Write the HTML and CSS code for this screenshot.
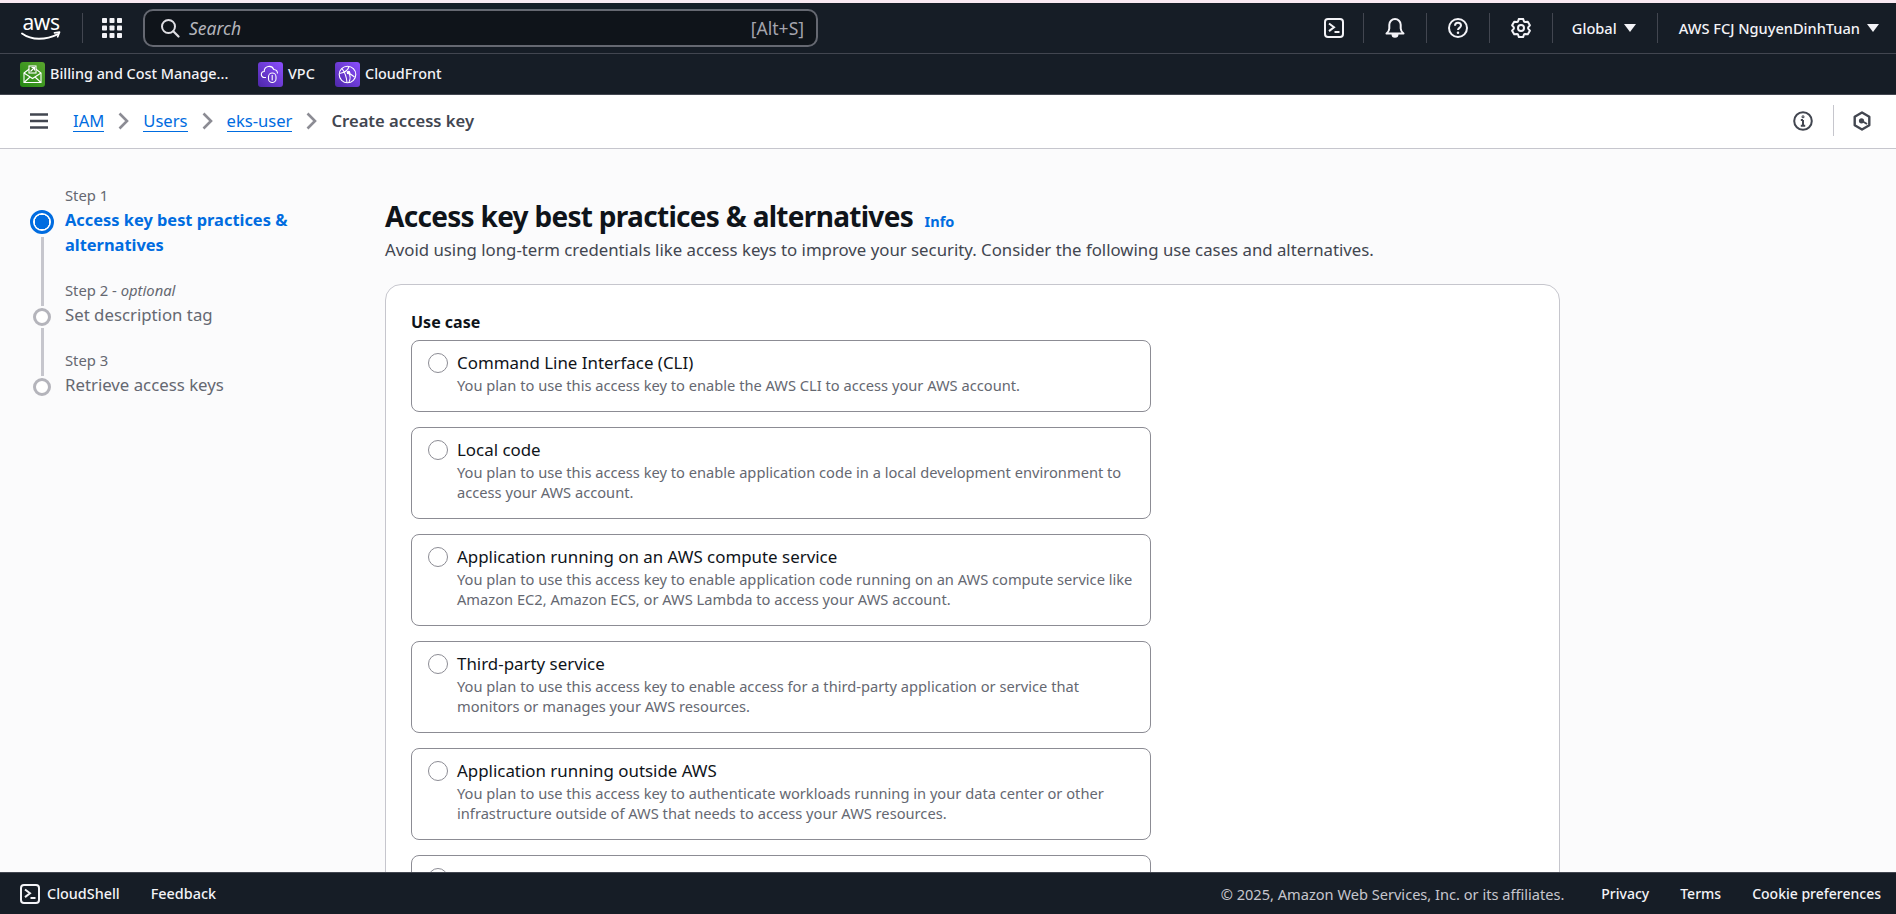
FILE: index.html
```html
<!DOCTYPE html>
<html lang="en">
<head>
<meta charset="utf-8">
<title>Create access key</title>
<link rel="stylesheet" href="styles.css">
</head>
<body>
<div class="strip"></div>
<header class="topnav">
  <svg class="aws" viewBox="0 0 40 26" width="40" height="26">
    <text x="20" y="14" text-anchor="middle" class="aws-text">aws</text>
    <path d="M1 17.500c5 3.600 11 5.300 17 5.300 6 0 13-1.600 19-4.600" fill="none" stroke="#fff" stroke-width="1.900" stroke-linecap="round"/>
    <path d="M33.500 16.800l5-.6-1.800 4.600" fill="none" stroke="#fff" stroke-width="1.700" stroke-linecap="round" stroke-linejoin="round"/>
  </svg>
  <span class="vr vr-logo"></span>
  <svg class="grid-ic" viewBox="0 0 20 20" width="20" height="20">
    <g fill="#f3f3f7"><rect x="0" y="0" width="5" height="5" rx=".8"/><rect x="7.500" y="0" width="5" height="5" rx=".8"/><rect x="15" y="0" width="5" height="5" rx=".8"/><rect x="0" y="7.500" width="5" height="5" rx=".8"/><rect x="7.500" y="7.500" width="5" height="5" rx=".8"/><rect x="15" y="7.500" width="5" height="5" rx=".8"/><rect x="0" y="15" width="5" height="5" rx=".8"/><rect x="7.500" y="15" width="5" height="5" rx=".8"/><rect x="15" y="15" width="5" height="5" rx=".8"/></g>
  </svg>
  <div class="search">
    <svg viewBox="0 0 20 20" width="20" height="20"><circle cx="8.500" cy="8.500" r="6.500" fill="none" stroke="#dedee3" stroke-width="2"/><path d="M13.300 13.300l5.200 5.200" stroke="#dedee3" stroke-width="2.200" stroke-linecap="round"/></svg>
    <span class="search-ph">Search</span>
    <span class="search-kbd">[Alt+S]</span>
  </div>
  <div class="nav-right">
    <span class="nav-ic nav-ic-first"><svg viewBox="0 0 20 20" width="20" height="20" fill="none" stroke="#f3f3f7" stroke-width="2"><rect x="1" y="1" width="18" height="18" rx="3"/><path d="M5 5.500l5 3.800-5 3.800M10.500 14h5"/></svg></span>
    <span class="vr"></span>
    <span class="nav-ic"><svg viewBox="0 0 20 20" width="20" height="20" fill="none" stroke="#f3f3f7" stroke-width="2" stroke-linejoin="round"><path d="M1.500 15.500h17c-1.500-1.300-2.800-2.500-2.800-5V6.700a5.700 5.700 0 0 0-11.400 0v3.800c0 2.500-1.300 3.700-2.800 5z"/><path d="M7.500 16.200a2.500 2.500 0 0 0 5 0z" fill="#f3f3f7"/></svg></span>
    <span class="vr"></span>
    <span class="nav-ic"><svg viewBox="0 0 20 20" width="20" height="20" fill="none" stroke="#f3f3f7" stroke-width="2"><circle cx="10" cy="10" r="9"/><path d="M7 7.800c0-1.800 1.400-3 3-3s3 1.100 3 2.800c0 2.200-3 2.300-3 4.400"/><circle cx="10" cy="14.800" r=".6" stroke-width="1.400"/></svg></span>
    <span class="vr"></span>
    <span class="nav-ic"><svg viewBox="0 0 20 20" width="20" height="20" fill="none" stroke="#f3f3f7" stroke-width="2" stroke-linejoin="round"><path d="M7.900 .9H12.100L13 3.500 14.130 4.100 16.800 3.660 18.890 7.280 17.170 9.370V10.630L18.890 12.720 16.800 16.340 14.130 15.900 13 16.500 12.100 19.100H7.900L7 16.500 5.870 15.900 3.200 16.340 1.110 12.720 2.830 10.630V9.370L1.110 7.280 3.200 3.660 5.870 4.100 7 3.500Z"/><circle cx="10" cy="10" r="3"/></svg></span>
    <span class="vr"></span>
    <span class="nav-menu nav-region">Global<i class="caret"></i></span>
    <span class="vr"></span>
    <span class="nav-menu nav-user">AWS FCJ NguyenDinhTuan<i class="caret"></i></span>
  </div>
</header>
<nav class="favbar">
  <a class="fav fav-billing">
    <svg class="svc svc-green" viewBox="0 0 25 25" width="25" height="25" fill="none" stroke="#fff" stroke-width="1.100"><path d="M4 11l8.500-6.500L21 11v9.500H4z"/><path d="M4 11l8.500 5.500L21 11M4 20.500l6-5.500M21 20.500l-6-5.500"/><rect x="9" y="4" width="7" height="7" fill="#3f8624"/><path d="M10.500 9.500l4-4M11.500 5.500h3v3"/></svg>
    <span>Billing and Cost Manage...</span>
  </a>
  <a class="fav fav-vpc">
    <svg class="svc svc-purple" viewBox="0 0 25 25" width="25" height="25" fill="none" stroke="#fff" stroke-width="1.100"><path d="M8 15.500H6.500a3 3 0 0 1-.3-6 5 5 0 0 1 9.600-2 4 4 0 0 1 3.700 4"/><rect x="10.500" y="11" width="7.500" height="9.500" rx="3.700"/><path d="M14.200 13v5.500"/></svg>
    <span>VPC</span>
  </a>
  <a class="fav fav-cf">
    <svg class="svc svc-purple" viewBox="0 0 25 25" width="25" height="25" fill="none" stroke="#fff" stroke-width="1.100"><circle cx="12.500" cy="12.500" r="8.300"/><path d="M7 6.500c3 4 4.500 8 5 14M14 4.500c-1 4-4 6-9.500 7M14 11l5.500 4M14 11c1.500 3 1.500 6 0 9"/><circle cx="13.500" cy="10.500" r="1.300" fill="#fff"/></svg>
    <span>CloudFront</span>
  </a>
</nav>
<div class="crumbbar">
  <svg class="menu-ic" viewBox="0 0 18 16" width="18" height="16"><path d="M0 1.500h18M0 8h18M0 14.500h18" stroke="#424650" stroke-width="2.600"/></svg>
  <a class="crumb">IAM</a>
  <svg class="chev" viewBox="0 0 11 18" width="11" height="18"><path d="M1.500 1.500L9 9l-7.500 7.500" fill="none" stroke="#8c8c94" stroke-width="2.600"/></svg>
  <a class="crumb">Users</a>
  <svg class="chev" viewBox="0 0 11 18" width="11" height="18"><path d="M1.500 1.500L9 9l-7.500 7.500" fill="none" stroke="#8c8c94" stroke-width="2.600"/></svg>
  <a class="crumb">eks-user</a>
  <svg class="chev" viewBox="0 0 11 18" width="11" height="18"><path d="M1.500 1.500L9 9l-7.500 7.500" fill="none" stroke="#8c8c94" stroke-width="2.600"/></svg>
  <span class="crumb-current">Create access key</span>
  <div class="crumb-tools">
    <svg viewBox="0 0 20 20" width="20" height="20" fill="none" stroke="#424650" stroke-width="2"><circle cx="10" cy="10" r="8.800"/><path d="M10 9v6M7.800 14.800h4.400M7.800 9h2.200"/><circle cx="10" cy="5.700" r=".5"/></svg>
    <span class="vr vr-tools"></span>
    <svg viewBox="0 0 20 20" width="20" height="20" fill="none" stroke="#424650" stroke-width="2.400" stroke-linejoin="round"><path d="M10 1.500l7.300 4.200v8.600L10 18.500l-7.300-4.200V5.700z"/><path d="M10 10l5 3" stroke-width="2"/><circle cx="9.500" cy="9.800" r="2.600" fill="#424650" stroke="none"/></svg>
  </div>
</div>
<div class="main">
  <aside class="steps">
    <div class="step step-line-long">
      <div class="step-label">Step 1</div>
      <div class="step-title step-title-active"><i class="dot dot-active"></i>Access key best practices &amp; alternatives</div>
    </div>
    <div class="step step-line-short">
      <div class="step-label">Step 2 - <em>optional</em></div>
      <div class="step-title"><i class="dot"></i>Set description tag</div>
    </div>
    <div class="step">
      <div class="step-label">Step 3</div>
      <div class="step-title"><i class="dot"></i>Retrieve access keys</div>
    </div>
  </aside>
  <section class="content">
    <h1 class="title">Access key best practices &amp; alternatives <a class="info">Info</a></h1>
    <p class="subtitle">Avoid using long-term credentials like access keys to improve your security. Consider the following use cases and alternatives.</p>
    <div class="card">
      <div class="field-label">Use case</div>
      <div class="options">
        <div class="option"><i class="radio"></i><div><div class="opt-title">Command Line Interface (CLI)</div><div class="opt-desc">You plan to use this access key to enable the AWS CLI to access your AWS account.</div></div></div>
        <div class="option"><i class="radio"></i><div><div class="opt-title">Local code</div><div class="opt-desc">You plan to use this access key to enable application code in a local development environment to access your AWS account.</div></div></div>
        <div class="option"><i class="radio"></i><div><div class="opt-title">Application running on an AWS compute service</div><div class="opt-desc">You plan to use this access key to enable application code running on an AWS compute service like Amazon EC2, Amazon ECS, or AWS Lambda to access your AWS account.</div></div></div>
        <div class="option"><i class="radio"></i><div><div class="opt-title">Third-party service</div><div class="opt-desc">You plan to use this access key to enable access for a third-party application or service that monitors or manages your AWS resources.</div></div></div>
        <div class="option"><i class="radio"></i><div><div class="opt-title">Application running outside AWS</div><div class="opt-desc">You plan to use this access key to authenticate workloads running in your data center or other infrastructure outside of AWS that needs to access your AWS resources.</div></div></div>
        <div class="option"><i class="radio"></i><div><div class="opt-title">Other</div><div class="opt-desc">Your use case is not listed here.</div></div></div>
      </div>
    </div>
  </section>
</div>
<footer class="footer">
  <svg viewBox="0 0 20 20" width="20" height="20" fill="none" stroke="#f3f3f7" stroke-width="2"><rect x="1" y="1" width="18" height="18" rx="3"/><path d="M5 5.500l5 3.800-5 3.800M10.500 14h5"/></svg>
  <a class="foot-shell">CloudShell</a>
  <a class="foot-feedback">Feedback</a>
  <span class="foot-copy">© 2025, Amazon Web Services, Inc. or its affiliates.</span>
  <a class="foot-link">Privacy</a>
  <a class="foot-link">Terms</a>
  <a class="foot-link">Cookie preferences</a>
</footer>
</body>
</html>
```
FILE: styles.css
```css
* { box-sizing: border-box; }
html, body { height: 100%; }
body {
  margin: 0;
  height: 914px;
  overflow: hidden;
  display: flex;
  flex-direction: column;
  background: #fbfbfc;
  color: #0f141a;
  font: 14px/20px "Noto Sans", sans-serif;
}
a { color: inherit; text-decoration: none; }
i { font-style: normal; }
.strip { height: 3px; background: #f9e9f1; flex: none; }

.topnav {
  height: 51px; flex: none;
  display: flex; align-items: center;
  background: #161d26;
  border-bottom: 1px solid #424650;
  padding-left: 21px;
}
.aws { flex: none; margin-top: 2px; overflow: visible; }
.aws-text { font: 400 21px "Noto Sans", sans-serif; fill: #fff; letter-spacing: -.4px; }
.vr { width: 1px; height: 30px; background: #424650; flex: none; }
.vr-logo { margin: 0 19px 0 21px; }
.grid-ic { flex: none; }
.search {
  margin-left: 21px; width: 675px; height: 38px;
  display: flex; align-items: center;
  padding: 0 12px 0 15px;
  background: #0f141a;
  border: 2px solid #656871;
  border-radius: 10px;
  color: #b4b4bb;
  font-size: 17.500px;
}
.search-ph { margin-left: 9px; font-style: italic; flex: 1; }
.search-kbd { color: #a4a4ad; }
.nav-right { margin-left: auto; display: flex; align-items: center; color: #f3f3f7; padding-right: 17px; }
.nav-ic { width: 62px; display: flex; justify-content: center; }
.nav-ic-first { padding-left: 4px; }
.nav-menu { display: flex; align-items: center; font-weight: 500; font-size: 14.600px; }
.nav-region { padding: 0 21px 0 19px; }
.nav-user { padding-left: 21px; }
.caret {
  width: 0; height: 0; margin-left: 7px;
  border-left: 6px solid transparent; border-right: 6px solid transparent;
  border-top: 8px solid #f3f3f7;
}

.favbar {
  height: 41px; flex: none;
  display: flex; align-items: center;
  background: #161d26;
  border-bottom: 1px solid #424650;
  padding-left: 20px;
  color: #f3f3f7;
  font-weight: 500;
  font-size: 14.400px;
}
.fav { display: flex; align-items: center; gap: 5px; white-space: nowrap; }
.fav-billing { width: 238px; }
.fav-vpc { width: 77px; }
.svc { flex: none; border-radius: 3px; }
.svc-green { background: linear-gradient(45deg, #248814, #5aa62e); }
.svc-purple { background: linear-gradient(45deg, #4d27a8, #8c4fff); }

.crumbbar {
  height: 54px; flex: none;
  display: flex; align-items: center;
  background: #fff;
  border-bottom: 1px solid #c6c6cd;
  padding: 0 24px 2px 30px;
  font-size: 16.600px;
}
.menu-ic { flex: none; margin-right: 25px; }
.crumb { color: #006ce0; border-bottom: 1px solid #006ce0; line-height: 21px; }
.chev { margin: 0 14px; flex: none; }
.crumb-current { color: #424650; font-weight: 600; }
.crumb-tools { margin-left: auto; display: flex; align-items: center; }
.vr-tools { height: 31px; background: #c6c6cd; margin: 0 18px 0 20px; }

.main { flex: 1; min-height: 0; display: flex; overflow: hidden; }
.steps { width: 385px; flex: none; padding: 35px 50px 0 65px; }
.step { position: relative; margin-bottom: 22px; }
.step-label { color: #656871; line-height: 22px; margin-bottom: 1px; font-size: 14.800px; }
.step-title { position: relative; font-size: 16.800px; line-height: 25px; color: #656871; }
.step-title-active { color: #006ce0; font-weight: 700; font-size: 16.400px; }
.dot {
  position: absolute; left: -32px; top: 6px;
  width: 18px; height: 18px; border-radius: 50%;
  border: 3px solid #b4b4bb;
  background: #fff;
}
.dot-active {
  left: -35px; top: 3px;
  width: 24px; height: 24px;
  border-color: #006ce0;
  background: radial-gradient(circle, #006ce0 0 7px, #fff 7.500px);
}
.step-line-long::after, .step-line-short::after {
  content: ""; position: absolute; left: -24px; width: 3px; background: #c6c6cd;
}
.step-line-long::after { top: 53px; height: 69px; }
.step-line-short::after { top: 49px; height: 48px; }

.content { flex: none; width: 1175px; }
.title {
  margin: 49px 0 0; font-size: 28px; line-height: 36px; font-weight: 700; letter-spacing: -.7px;
}
.info { font-size: 14.500px; color: #006ce0; font-weight: 700; margin-left: 5px; letter-spacing: 0; }
.subtitle { margin: -1px 0 0; font-size: 16.800px; line-height: 24px; color: #424650; }
.card {
  margin-top: 22px;
  background: #fff;
  border: 1px solid #c6c6cd;
  border-radius: 16px;
  padding: 27px 25px 0;
  min-height: 700px;
}
.field-label { font-weight: 700; font-size: 16px; line-height: 20px; margin-bottom: 8px; }
.options { width: 740px; display: flex; flex-direction: column; gap: 15px; }
.option {
  display: flex; gap: 9px;
  border: 1px solid #8c8c94;
  border-radius: 8px;
  padding: 11px 14px 16px 16px;
}
.radio {
  flex: none; width: 20px; height: 20px; margin-top: 1px;
  border: 1.500px solid #8c8c94; border-radius: 50%; background: #fff;
}
.opt-title { font-size: 16.900px; line-height: 22px; margin-bottom: 1px; }
.opt-desc { color: #656871; line-height: 20px; font-size: 14.660px; }

.footer {
  height: 42px; flex: none;
  position: relative;
  display: flex; align-items: center;
  background: #161d26;
  border-top: 1px solid #424650;
  padding: 0 15px 0 20px;
  color: #f3f3f7;
  font-weight: 500;
}
.foot-shell { margin-left: 7px; font-size: 14.400px; }
.foot-feedback { margin-left: 31px; font-size: 14.400px; }
.foot-copy { margin-left: auto; margin-right: 37px; color: #c6c6cd; font-weight: 400; font-size: 14.600px; }
.foot-link { margin-left: 31px; }
.foot-copy + .foot-link { margin-left: 0; }
```
